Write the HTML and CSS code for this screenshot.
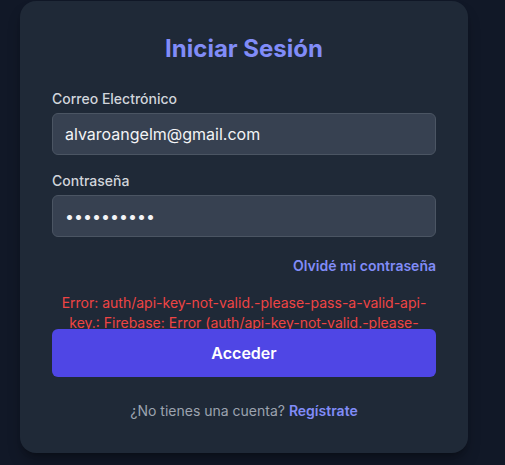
FILE: index.html
```html
<!DOCTYPE html>
<html lang="es">
<head>
<meta charset="utf-8">
<title>Iniciar Sesión</title>
<link rel="stylesheet" href="styles.css">
</head>
<body>
<div class="card">
  <h2 class="title">Iniciar Sesión</h2>
  <div class="field">
    <label class="label" for="email">Correo Electrónico</label>
    <input class="input" id="email" type="email" value="alvaroangelm@gmail.com">
  </div>
  <div class="field last">
    <label class="label" for="pass">Contraseña</label>
    <input class="input" id="pass" type="password" value="1234567890">
  </div>
  <div class="forgot"><a href="#">Olvidé mi contraseña</a></div>
  <div class="error">Error: auth/api-key-not-valid.-please-pass-a-valid-api-key.: Firebase: Error (auth/api-key-not-valid.-please-pass-a-valid-api-key.).</div>
  <button class="btn" type="button">Acceder</button>
  <p class="signup">¿No tienes una cuenta? <a href="#">Regístrate</a></p>
</div>
</body>
</html>
```
FILE: styles.css
```css
* { box-sizing: border-box; }
html, body {
  margin: 0;
  padding: 0;
  background: #111827;
  font-family: Inter, "Noto Sans", sans-serif;
  height: 465px;
  overflow: hidden;
}
.card {
  width: 448px;
  margin: 1px 0 0 20px;
  padding: 32px;
  background: #1f2937;
  border-radius: 16px;
  box-shadow: 0 10px 15px -3px rgba(0,0,0,0.3), 0 4px 6px -4px rgba(0,0,0,0.3);
}
.title {
  margin: 0 0 24px;
  font-size: 24px;
  line-height: 32px;
  font-weight: 700;
  text-align: center;
  color: #818cf8;
}
.field { margin-bottom: 16px; }
.field.last { margin-bottom: 0; }
.label {
  display: block;
  font-size: 14px;
  line-height: 20px;
  font-weight: 500;
  color: #d1d5db;
  margin-bottom: 4px;
}
.input {
  display: block;
  width: 100%;
  height: 42px;
  padding: 8px 12px;
  font-family: inherit;
  font-size: 16px;
  line-height: 24px;
  color: #f3f4f6;
  background: #374151;
  border: 1px solid #4b5563;
  border-radius: 6px;
  outline: none;
}
.forgot {
  margin-top: 19px;
  text-align: right;
  font-size: 14px;
  line-height: 20px;
  font-weight: 600;
}
.forgot a, .signup a {
  color: #818cf8;
  text-decoration: none;
  font-weight: 600;
}
.error {
  margin-top: 17px;
  height: 36px;
  overflow: hidden;
  text-align: center;
  font-size: 14px;
  line-height: 20px;
  color: #ef4444;
}
.btn {
  display: block;
  width: 100%;
  height: 48px;
  border: 0;
  border-radius: 6px;
  background: #4f46e5;
  color: #ffffff;
  font-family: inherit;
  font-size: 16px;
  font-weight: 600;
  line-height: 24px;
  cursor: pointer;
}
.signup {
  margin: 24px 0 0;
  text-align: center;
  font-size: 14px;
  line-height: 20px;
  color: #9ca3af;
}
```
